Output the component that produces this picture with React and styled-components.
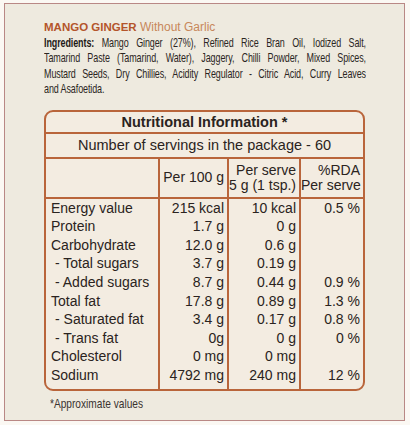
import React from "react";
import styled, { createGlobalStyle } from "styled-components";

const GlobalStyle = createGlobalStyle`
  html, body {
    margin: 0;
    padding: 0;
    background: #fbf8f3;
  }
  body {
    font-family: "Liberation Sans", Arial, sans-serif;
    color: #2a2320;
  }
`;

const rows = [
  { name: "Energy value", per100: "215 kcal", serve: "10 kcal", rda: "0.5 %" },
  { name: "Protein", per100: "1.7 g", serve: "0 g", rda: "" },
  { name: "Carbohydrate", per100: "12.0 g", serve: "0.6 g", rda: "" },
  { name: "- Total sugars", per100: "3.7 g", serve: "0.19 g", rda: "", sub: true },
  { name: "- Added sugars", per100: "8.7 g", serve: "0.44 g", rda: "0.9 %", sub: true },
  { name: "Total fat", per100: "17.8 g", serve: "0.89 g", rda: "1.3 %" },
  { name: "- Saturated fat", per100: "3.4 g", serve: "0.17 g", rda: "0.8 %", sub: true },
  { name: "- Trans fat", per100: "0g", serve: "0 g", rda: "0 %", sub: true },
  { name: "Cholesterol", per100: "0 mg", serve: "0 mg", rda: "" },
  { name: "Sodium", per100: "4792 mg", serve: "240 mg", rda: "12 %" },
];

// one entry per printed line, so the breaks match the label
const ingredientLines = [
  { text: "Mango Ginger (27%), Refined Rice Bran Oil, Iodized Salt,", first: true },
  { text: "Tamarind Paste (Tamarind, Water), Jaggery, Chilli Powder, Mixed Spices," },
  { text: "Mustard Seeds, Dry Chillies, Acidity Regulator - Citric Acid, Curry Leaves" },
  { text: "and Asafoetida.", last: true },
];

const SQUEEZE = 0.665;

function App() {
  return (
    <>
      <GlobalStyle />
      <Frame>
        <Title>
          <strong>MANGO GINGER</strong> <span>Without Garlic</span>
        </Title>
        <Ingredients>
          {ingredientLines.map((l) => (
            <Line key={l.text} $last={l.last}>
              {l.first && <b>Ingredients: </b>}
              {l.text}
            </Line>
          ))}
        </Ingredients>

        <Table>
          <colgroup>
            <col style={{ width: 112 }} />
            <col style={{ width: 69 }} />
            <col style={{ width: 72 }} />
            <col style={{ width: 64 }} />
          </colgroup>
          <tbody>
            <tr>
              <HeadCell colSpan={4} $bold>
                Nutritional Information *
              </HeadCell>
            </tr>
            <tr>
              <HeadCell colSpan={4} $tall>
                Number of servings in the package - 60
              </HeadCell>
            </tr>
            <tr>
              <ColHead />
              <ColHead>Per 100 g</ColHead>
              <ColHead>
                Per serve
                <br />5 g (1 tsp.)
              </ColHead>
              <ColHead>
                %RDA
                <br />
                Per serve
              </ColHead>
            </tr>
            {rows.map((r, i) => (
              <BodyRow key={r.name} $first={i === 0} $last={i === rows.length - 1}>
                <NameCell $sub={r.sub}>{r.name}</NameCell>
                <ValueCell>{r.per100}</ValueCell>
                <ValueCell>{r.serve}</ValueCell>
                <ValueCell>{r.rda}</ValueCell>
              </BodyRow>
            ))}
          </tbody>
        </Table>
        <Note>*Approximate values</Note>
      </Frame>
    </>
  );
}

const Frame = styled.div`
  box-sizing: border-box;
  width: 401px;
  height: 418px;
  margin: 3px 0 0 4px;
  border: 1px solid #b98885;
  background: #eeeadf;
  padding: 15px 0 0 39px;
  overflow: hidden;
`;

const Title = styled.div`
  font-size: 12px;
  line-height: 16px;
  height: 16px;

  strong {
    font-size: 11.5px;
    font-weight: 700;
    color: #b4552b;
  }

  span {
    color: #c7875a;
  }
`;

const Ingredients = styled.div`
  width: 322px;
  overflow: hidden;
  font-size: 13.5px;
  line-height: 15.4px;
  letter-spacing: -0.15px;
  color: #2b2623;

  b {
    font-weight: 700;
    color: #1f1a18;
  }
`;

const Line = styled.div`
  width: ${322 / SQUEEZE}px;
  transform: scaleX(${SQUEEZE});
  transform-origin: left top;
  white-space: nowrap;
  text-align: justify;
  text-align-last: ${(p) => (p.$last ? "left" : "justify")};
`;

const Table = styled.table`
  margin-top: 13px;
  width: 321px;
  border-spacing: 0;
  border: 2px solid #b9653b;
  border-radius: 9px;
  background: #f3ece1;
  font-size: 14px;
  color: #2a2320;
  table-layout: fixed;
`;

const HeadCell = styled.td`
  text-align: center;
  border-bottom: 2px solid #b9653b;
  font-weight: ${(p) => (p.$bold ? 700 : 400)};
  font-size: 14.5px;
  height: ${(p) => (p.$tall ? "23px" : "20px")};
  padding: 0;
  line-height: 18px;
`;

const ColHead = styled.td`
  height: 38px;
  padding: 0 3px 0 0;
  text-align: right;
  line-height: 15px;
  border-bottom: 2px solid #b9653b;
  vertical-align: middle;
  white-space: nowrap;

  & + & {
    border-left: 2px solid #b9653b;
  }
`;

const BodyRow = styled.tr`
  td {
    padding-top: ${(p) => (p.$first ? "0" : "0")};
    padding-bottom: ${(p) => (p.$last ? "4px" : "0")};
  }
`;

const NameCell = styled.td`
  line-height: 18.6px;
  padding-left: ${(p) => (p.$sub ? "9px" : "5px")};
  white-space: nowrap;
`;

const ValueCell = styled.td`
  line-height: 18.6px;
  text-align: right;
  border-left: 2px solid #b9653b;
  padding-right: 3px;
  white-space: nowrap;
`;

const Note = styled.div`
  margin: 5px 0 0 6px;
  font-size: 13px;
  line-height: 15px;
  color: #3a3330;
  transform: scaleX(0.78);
  transform-origin: left top;
`;

export default App;
